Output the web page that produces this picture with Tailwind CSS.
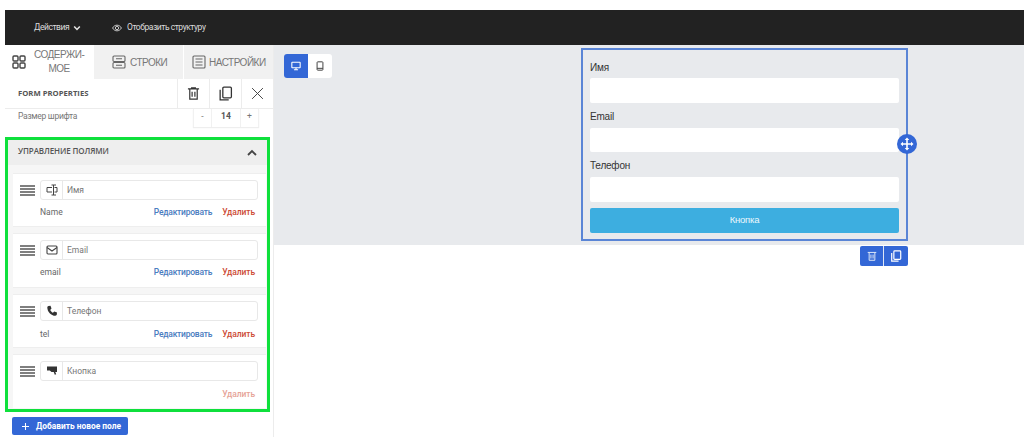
<!doctype html>
<html lang="ru">
<head>
<meta charset="utf-8">
<title>Form editor</title>
<script src="https://cdn.jsdelivr.net/npm/@tailwindcss/browser@4"></script>
</head>
<body class="bg-white font-['Roboto',sans-serif] overflow-hidden antialiased">
<div class="w-[1024px] h-[437px] pt-[10px] pl-[5px] overflow-hidden">
  <!-- top bar -->
  <div class="h-[35px] bg-[#222222] flex items-center text-[8.500px] tracking-[-0.45px] text-[#dcdcdc] pl-[29px]">
    <span class="w-[34px] whitespace-nowrap">Действия</span>
    <svg class="ml-[5px] w-[8px] h-[8px]" viewBox="0 0 10 10" fill="none" stroke="#e4e4e4" stroke-width="2"><path d="M1.5 3.2 5 6.800l3.500-3.600"/></svg>
    <svg class="ml-[31px] w-[10px] h-[10px]" viewBox="0 0 12 12" fill="none" stroke="#e4e4e4" stroke-width="1"><path d="M.7 6C2 3.700 3.900 2.600 6 2.600S10 3.700 11.300 6C10 8.300 8.100 9.400 6 9.400S2 8.300.7 6Z"/><circle cx="6" cy="6" r="2"/></svg>
    <span class="ml-[5px] whitespace-nowrap">Отобразить структуру</span>
  </div>

  <div class="flex">
    <!-- sidebar -->
    <div class="w-[269px] h-[392px] shrink-0 border-r border-[#ececec] relative">
      <div class="flex h-[34px] text-[10px] tracking-[-0.5px] text-[#777] font-['Liberation_Sans',sans-serif]">
        <div class="w-[89px] flex items-center bg-white pl-[7px]">
          <svg class="w-[14px] h-[14px] shrink-0" viewBox="0 0 14 14" fill="none" stroke="#444" stroke-width="1.400"><rect x="1" y="1" width="5" height="5" rx="1"/><rect x="8" y="1" width="5" height="5" rx="1"/><rect x="1" y="8" width="5" height="5" rx="1"/><rect x="8" y="8" width="5" height="5" rx="1"/></svg>
          <span class="ml-[8px] text-center leading-[14px] whitespace-nowrap">СОДЕРЖИ-<br>МОЕ</span>
        </div>
        <div class="w-[90px] flex items-center bg-[#f1f1f1] border-r border-white pl-[18px]">
          <svg class="w-[14px] h-[14px] shrink-0" viewBox="0 0 14 14" fill="none" stroke="#666" stroke-width="1.100"><rect x="1" y="1" width="12" height="5.500" rx="1"/><rect x="1" y="7.500" width="12" height="5.500" rx="1"/><path d="M4 3.700h6M4 10.200h6"/></svg>
          <span class="ml-[4px]">СТРОКИ</span>
        </div>
        <div class="w-[89px] flex items-center bg-[#f1f1f1] pl-[8px]">
          <svg class="w-[14px] h-[14px] shrink-0" viewBox="0 0 14 14" fill="none" stroke="#666" stroke-width="1.100"><rect x="1" y="1" width="12" height="12" rx="1"/><path d="M3.500 4h7M3.500 7h7M3.500 10h7"/></svg>
          <span class="ml-[3px]">НАСТРОЙКИ</span>
        </div>
      </div>

      <div class="flex items-stretch h-[30px] border-b border-[#ececec]">
        <div class="flex-1 flex items-center pl-[13px] text-[7.700px] font-bold text-[#555] font-['Open_Sans',sans-serif]">FORM PROPERTIES</div>
        <div class="w-[32px] flex items-center justify-center border-l border-[#ececec]">
          <svg class="w-[13px] h-[13px]" viewBox="0 0 14 14" fill="none" stroke="#333" stroke-width="1.300"><path d="M1 2h12M3 2v11h8V2M5.500 5v5.500M8.500 5v5.500M5 2V1h4v1"/></svg>
        </div>
        <div class="w-[32px] flex items-center justify-center border-l border-[#ececec]">
          <svg class="w-[15px] h-[15px]" viewBox="0 0 14 14" fill="none" stroke="#333" stroke-width="1.200"><rect x="4.500" y="1" width="8" height="10" rx="1"/><path d="M2 3.500V13h8"/></svg>
        </div>
        <div class="w-[32px] flex items-center justify-center border-l border-[#ececec]">
          <svg class="w-[13px] h-[13px]" viewBox="0 0 12 12" fill="none" stroke="#444" stroke-width=".9"><path d="M1 1l10 10M11 1 1 11"/></svg>
        </div>
      </div>

      <div class="flex h-[18px] pl-[13px] pr-[14px] text-[8.500px] text-[#777] justify-between">
        <span class="leading-[14px] tracking-[-0.3px]">Размер шрифта</span>
        <div class="flex text-center leading-[15px] shadow-[0_1px_1px_#eee]">
          <span class="w-[19px] border-x border-[#f1f1f1]">-</span>
          <span class="w-[29px] font-bold text-[#555] border-r border-[#f1f1f1]">14</span>
          <span class="w-[18px] border-r border-[#f1f1f1]">+</span>
        </div>
      </div>

      <!-- fields panel -->
      <div class="mt-[10px] w-[265px] h-[275px] border-[3px] border-[#0fe03c]">
        <div class="h-[25px] bg-[#eeeeee] flex items-center justify-between pl-[10px] pr-[10px] text-[8px] tracking-[-0.1px] font-semibold text-[#555] font-['Open_Sans',sans-serif]">
          <span class="mt-[-3px]">УПРАВЛЕНИЕ ПОЛЯМИ</span>
          <svg class="w-[10px] h-[10px]" viewBox="0 0 10 10" fill="none" stroke="#444" stroke-width="1.800"><path d="M1 7l4-4 4 4"/></svg>
        </div>
        <div class="bg-[#f6f6f6] h-[244px] pt-[8px] pl-[5px] pr-[1px] flex flex-col gap-[6px]">

          <div class="h-[54px] bg-white border-y border-[#eeeeee] flex pt-[6px]">
            <svg class="ml-[7px] mt-[5px] w-[15px] h-[11px] shrink-0" viewBox="0 0 15 11" fill="none" stroke="#555" stroke-width="1.300"><path d="M0 1h15M0 4h15M0 7h15M0 10h15"/></svg>
            <div class="ml-[5px] flex-1">
              <div class="w-[218px] h-[20px] flex border border-[#e8e8e8] rounded-[3px] text-[8.500px] text-[#777]">
                <div class="w-[22px] flex items-center justify-center border-r border-[#e8e8e8]">
                  <svg class="w-[12px] h-[12px]" viewBox="0 0 12 12" fill="none" stroke="#444" stroke-width="1"><path d="M6 3.500H1v4.500h5M8.500 3.500H11v4.500H8.500M5.500 1h4.500M7.500 1v10M5.500 11h4.500"/></svg>
                </div>
                <div class="flex items-center pl-[4px]">Имя</div>
              </div>
              <div class="w-[215px] mt-[6px] flex text-[8.500px] leading-[12px]">
                <span class="flex-1 text-[#666]">Name</span>
                <span class="text-[#4a7cc0] font-medium tracking-[-0.23px]">Редактировать</span>
                <span class="ml-[10px] text-[#cc4a35] font-medium tracking-[-0.1px]">Удалить</span>
              </div>
            </div>
          </div>

          <div class="h-[55px] bg-white border-y border-[#eeeeee] flex pt-[6px]">
            <svg class="ml-[7px] mt-[5px] w-[15px] h-[11px] shrink-0" viewBox="0 0 15 11" fill="none" stroke="#555" stroke-width="1.300"><path d="M0 1h15M0 4h15M0 7h15M0 10h15"/></svg>
            <div class="ml-[5px] flex-1">
              <div class="w-[218px] h-[20px] flex border border-[#e8e8e8] rounded-[3px] text-[8.500px] text-[#777]">
                <div class="w-[22px] flex items-center justify-center border-r border-[#e8e8e8]">
                  <svg class="w-[12px] h-[12px]" viewBox="0 0 12 12" fill="none" stroke="#444" stroke-width="1.100"><rect x="1" y="2" width="10" height="8" rx="1"/><path d="M1 3.500 6 7l5-3.500"/></svg>
                </div>
                <div class="flex items-center pl-[4px]">Email</div>
              </div>
              <div class="w-[215px] mt-[6px] flex text-[8.500px] leading-[12px]">
                <span class="flex-1 text-[#666]">email</span>
                <span class="text-[#4a7cc0] font-medium tracking-[-0.23px]">Редактировать</span>
                <span class="ml-[10px] text-[#cc4a35] font-medium tracking-[-0.1px]">Удалить</span>
              </div>
            </div>
          </div>

          <div class="h-[54px] bg-white border-y border-[#eeeeee] flex pt-[6px]">
            <svg class="ml-[7px] mt-[5px] w-[15px] h-[11px] shrink-0" viewBox="0 0 15 11" fill="none" stroke="#555" stroke-width="1.300"><path d="M0 1h15M0 4h15M0 7h15M0 10h15"/></svg>
            <div class="ml-[5px] flex-1">
              <div class="w-[218px] h-[20px] flex border border-[#e8e8e8] rounded-[3px] text-[8.500px] text-[#777]">
                <div class="w-[22px] flex items-center justify-center border-r border-[#e8e8e8]">
                  <svg class="w-[12px] h-[12px]" viewBox="0 0 12 12" fill="#333"><path d="M2.500 1 4.500.8l1 2.700L4.200 5c.5 1.100 1.500 2.100 2.700 2.700l1.400-1.300 2.700 1.100-.2 2.100c-.1.700-.7 1.200-1.400 1.200C5 10.500 1.400 6.800 1.300 2.400c0-.7.5-1.300 1.200-1.400Z"/></svg>
                </div>
                <div class="flex items-center pl-[4px]">Телефон</div>
              </div>
              <div class="w-[215px] mt-[7px] flex text-[8.500px] leading-[12px]">
                <span class="flex-1 text-[#666]">tel</span>
                <span class="text-[#4a7cc0] font-medium tracking-[-0.23px]">Редактировать</span>
                <span class="ml-[10px] text-[#cc4a35] font-medium tracking-[-0.1px]">Удалить</span>
              </div>
            </div>
          </div>

          <div class="h-[54px] bg-white border-t border-[#eeeeee] flex pt-[6px]">
            <svg class="ml-[7px] mt-[5px] w-[15px] h-[11px] shrink-0" viewBox="0 0 15 11" fill="none" stroke="#555" stroke-width="1.300"><path d="M0 1h15M0 4h15M0 7h15M0 10h15"/></svg>
            <div class="ml-[5px] flex-1">
              <div class="w-[218px] h-[20px] flex border border-[#e8e8e8] rounded-[3px] text-[8.500px] text-[#777]">
                <div class="w-[22px] flex items-center justify-center border-r border-[#e8e8e8]">
                  <svg class="w-[12px] h-[12px]" viewBox="0 0 12 12" fill="#333"><path d="M1 1.500h10v5.500H9.300l.9 2.200-1.400.6L7.700 7H5.500L3.800 5.500H1Z"/></svg>
                </div>
                <div class="flex items-center pl-[4px]">Кнопка</div>
              </div>
              <div class="w-[215px] mt-[7px] flex justify-end text-[8.500px] leading-[12px]">
                <span class="text-[#e6a397] font-medium tracking-[-0.1px]">Удалить</span>
              </div>
            </div>
          </div>

        </div>
      </div>

      <button class="mt-[5px] ml-[7px] w-[116px] h-[18px] bg-[#3367d6] rounded-[2px] flex items-center pl-[10px] text-white text-[8.400px] font-bold">
        <svg class="w-[7px] h-[7px]" viewBox="0 0 8 8" stroke="#fff" stroke-width="1.200"><path d="M4 0v8M0 4h8"/></svg>
        <span class="ml-[7px]">Добавить новое поле</span>
      </button>
    </div>

    <!-- canvas -->
    <div class="flex-1 min-w-0">
      <div class="h-[200px] bg-[#e8eaed] flex pt-[3px] relative">
        <div class="ml-[10px] mt-[6px] w-[48px] h-[24px] flex bg-white rounded-[3px] overflow-hidden shrink-0">
          <div class="w-[24px] bg-[#3367d6] flex items-center justify-center">
            <svg class="w-[10px] h-[10px]" viewBox="0 0 12 12" fill="none" stroke="#fff" stroke-width="1.300"><rect x="1" y="1.500" width="10" height="6.500" rx=".5"/><path d="M6 8v2.500M3.500 10.500h5"/></svg>
          </div>
          <div class="w-[24px] flex items-center justify-center">
            <svg class="w-[10px] h-[10px]" viewBox="0 0 12 12" fill="none" stroke="#444" stroke-width="1.200"><rect x="2.500" y="1" width="7" height="10" rx=".8"/><path d="M2.500 8.800h7"/></svg>
          </div>
        </div>

        <div class="ml-[249px] w-[327px] h-[193px] border-2 border-[#5a85d6] px-[7px] pt-[12px] text-[10px] tracking-[-0.2px] text-[#333] font-['Liberation_Sans',sans-serif] relative shrink-0">
          <div class="leading-[12px]">Имя</div>
          <div class="mt-[4px] h-[25px] bg-white rounded-[2px]"></div>
          <div class="mt-[8px] leading-[12px]">Email</div>
          <div class="mt-[5px] h-[24px] bg-white rounded-[2px]"></div>
          <div class="mt-[8px] leading-[12px]">Телефон</div>
          <div class="mt-[5px] h-[25px] bg-white rounded-[2px]"></div>
          <div class="mt-[6px] h-[25px] bg-[#3daee0] rounded-[2px] flex items-center justify-center text-white/90 text-[9.500px]">Кнопка</div>
          <div class="absolute right-[-11px] top-[84px] w-[20px] h-[20px] rounded-full bg-[#3367d6] flex items-center justify-center">
            <svg class="w-[14px] h-[14px]" viewBox="0 0 14 14" fill="#fff"><path d="M7 .5 9.300 3H7.800v3.200H11V4.700L13.500 7 11 9.300V7.800H7.800V11h1.500L7 13.500 4.700 11h1.500V7.800H3v1.500L.5 7 3 4.700v1.500h3.200V3H4.700Z"/></svg>
          </div>
        </div>
      </div>
      <div class="flex justify-end pr-[116px] pt-[1px]">
        <div class="flex w-[48px] h-[20px] rounded-[2px] overflow-hidden">
          <div class="w-[24px] bg-[#3367d6] flex items-center justify-center border-r border-[#dfe6f5]">
            <svg class="w-[10px] h-[10px]" viewBox="0 0 14 14" fill="none" stroke="#dce6f7" stroke-width="1.400"><path d="M1 2h12M3 2v11h8V2M5.500 5v5.500M8.500 5v5.500"/></svg>
          </div>
          <div class="w-[24px] bg-[#3367d6] flex items-center justify-center">
            <svg class="w-[12px] h-[12px]" viewBox="0 0 14 14" fill="none" stroke="#fff" stroke-width="1.400"><rect x="4.500" y="1" width="8" height="10" rx="1"/><path d="M2 3.500V13h8"/></svg>
          </div>
        </div>
      </div>
    </div>
  </div>
</div>
</body>
</html>
